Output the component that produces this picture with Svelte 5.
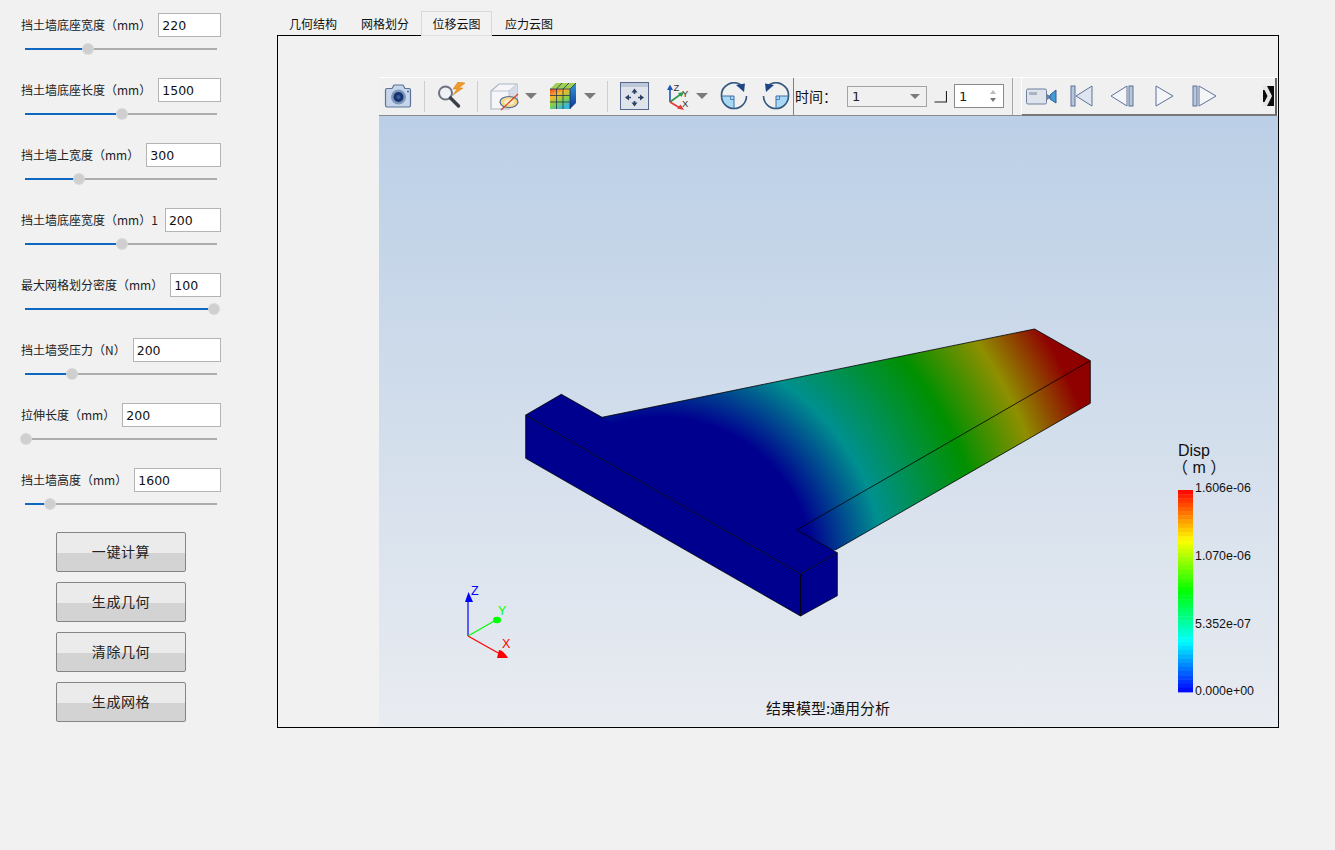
<script>
  const rows = [
    { label: '挡土墙底座宽度（mm）', value: '220', pos: 63 },
    { label: '挡土墙底座长度（mm）', value: '1500', pos: 97 },
    { label: '挡土墙上宽度（mm）', value: '300', pos: 54 },
    { label: '挡土墙底座宽度（mm）1', value: '200', pos: 97 },
    { label: '最大网格划分密度（mm）', value: '100', pos: 189 },
    { label: '挡土墙受压力（N）', value: '200', pos: 47 },
    { label: '拉伸长度（mm）', value: '200', pos: 1 },
    { label: '挡土墙高度（mm）', value: '1600', pos: 25 }
  ];
  const buttons = ['一键计算', '生成几何', '清除几何', '生成网格'];
  const tabs = ['几何结构', '网格划分', '位移云图', '应力云图'];

  function bandColor(t) {
    const seg = t * 4;
    const f = seg - Math.floor(seg);
    const up = Math.round(255 * f);
    const dn = 255 - up;
    if (seg < 1) return `rgb(255,${up},0)`;
    if (seg < 2) return `rgb(${dn},255,0)`;
    if (seg < 3) return `rgb(0,255,${up})`;
    return `rgb(0,${dn},255)`;
  }
  const bandCount = 48;
  const bands = Array.from({ length: bandCount }, (_, i) => ({
    y: 490 + (i * 202) / bandCount,
    color: bandColor((i + 0.5) / bandCount)
  }));
</script>

<div class="page">
  <aside class="panel">
    <div class="rows">
      {#each rows as r}
        <div class="row">
          <div class="head">
            <span class="label">{r.label}</span>
            <input class="field" value={r.value} readonly />
          </div>
          <div class="slider">
            <div class="fill" style="width:{r.pos}px"></div>
            <div class="thumb" style="left:{r.pos - 5}px"></div>
          </div>
        </div>
      {/each}
    </div>
    <div class="buttons">
      {#each buttons as b}
        <button class="btn">{b}</button>
      {/each}
    </div>
  </aside>

  <main class="main">
    <nav class="tabs">
      {#each tabs as t, i}
        <div class="tab" class:active={i === 2}>{t}</div>
      {/each}
    </nav>
    <section class="frame">
      <div class="toolbar">
        <svg class="ic cam" width="28" height="24" viewBox="0 0 28 24">
          <path d="M1.500 6 Q1.500 4.500 3 4.500 H8 L10 1 H19 L21 4.500 H25 Q26.500 4.500 26.500 6 V21 Q26.500 23 25 23 H3 Q1.500 23 1.500 21 Z" fill="#c6d5e9" stroke="#5b7299" stroke-width="1.200"/>
          <circle cx="14.500" cy="13" r="7.500" fill="#7e97bd"/>
          <circle cx="14.500" cy="13" r="5" fill="#17346e"/>
          <circle cx="14.500" cy="13" r="2" fill="#3b5b98"/>
          <circle cx="24" cy="7.500" r="0.900" fill="#41597f"/>
        </svg>
        <i class="sep s1"></i>
        <svg class="ic srch" width="30" height="28" viewBox="0 0 30 28">
          <path d="M21 0 L16 7 H20 L16 13 L26 6 H22 L28 1 Z" fill="#ee9a2a" stroke="#d17c12" stroke-width=".5"/>
          <circle cx="8.500" cy="11" r="6.500" fill="#eef2f6" stroke="#6d7480" stroke-width="2"/>
          <path d="M13.500 16 L21.500 24" stroke="#39404a" stroke-width="3.400" stroke-linecap="round"/>
        </svg>
        <i class="sep s2"></i>
        <svg class="ic cube" width="29" height="30" viewBox="0 0 29 30">
          <path d="M1 10 L9 3 H27 V21 L19 28 H1 Z" fill="#f6f6f8" stroke="#a9b4c6" stroke-width="1.200"/>
          <path d="M19 10 L27 3 V21 L19 28 Z" fill="#d7dde6"/>
          <path d="M1 10 H19 L27 3 M19 10 V28" fill="none" stroke="#b9c3d2" stroke-width="1"/>
          <ellipse cx="19" cy="21" rx="9" ry="5.500" fill="#f3d98c" stroke="#4f6a97" stroke-width="1.200"/>
          <ellipse cx="19" cy="21" rx="5" ry="2.800" fill="#f8eccb"/>
          <path d="M11 29 L28 13" stroke="#d6451f" stroke-width="1.200"/>
        </svg>
        <i class="arrow a1"></i>
        <svg class="ic grid" width="28" height="28" viewBox="0 0 28 28">
          <defs>
            <linearGradient id="rb" x1="0" y1="0" x2="0.500" y2="1">
              <stop offset="0" stop-color="#e8442c"/><stop offset=".35" stop-color="#f7b52c"/>
              <stop offset=".7" stop-color="#7ed14a"/><stop offset="1" stop-color="#3bb6d8"/>
            </linearGradient>
            <linearGradient id="rs" x1="0" y1="0" x2="0" y2="1">
              <stop offset="0" stop-color="#2f9ad6"/><stop offset="1" stop-color="#12349a"/>
            </linearGradient>
          </defs>
          <path d="M1 7 L7 1 H27 L21 7 Z" fill="#9fcf56"/>
          <path d="M21 7 L27 1 V21 L21 27 Z" fill="url(#rs)"/>
          <rect x="1" y="7" width="20" height="20" fill="url(#rb)"/>
          <path d="M1 13.500 H21 M1 20 H21 M7.500 7 V27 M14 7 V27 M21 7 V27 M1 7 H21 M7.500 7 L13 1 M14 7 L20 1 M21 7 L27 1" stroke="#27324a" stroke-width=".8" fill="none"/>
        </svg>
        <i class="arrow a2"></i>
        <i class="sep s3"></i>
        <svg class="ic fit" width="29" height="28" viewBox="0 0 29 28">
          <rect x=".500" y=".500" width="28" height="27" fill="#dfe3ea" stroke="#56698c"/>
          <rect x="1" y="1" width="27" height="4" fill="#bcc8da"/>
          <path d="M14.500 9 V12 M14.500 19 V22 M8 15.500 H11 M18 15.500 H21" stroke="#2d4266" stroke-width="1.600"/>
          <path d="M14.500 6.500 L11.500 10.500 H17.500 Z M14.500 24.500 L11.500 20.500 H17.500 Z M5 15.500 L9 12.500 V18.500 Z M24 15.500 L20 12.500 V18.500 Z" fill="#2d4266"/>
        </svg>
        <svg class="ic axes" width="26" height="28" viewBox="0 0 26 28">
          <path d="M6 20 V6" stroke="#1d55b5" stroke-width="1.600"/>
          <path d="M6 2.500 L3 8 H9 Z" fill="#1d55b5"/>
          <path d="M6 20 L17 12" stroke="#2b9a4a" stroke-width="1.600"/>
          <path d="M20 10 L14 11 L17.500 15 Z" fill="#2b9a4a"/>
          <path d="M6 20 L16 26" stroke="#e23a3a" stroke-width="1.600"/>
          <path d="M20 28 L13 26.500 L16.500 22.500 Z" fill="#e23a3a"/>
          <text x="9.500" y="9" class="axt">Z</text>
          <text x="18" y="15" class="axt">Y</text>
          <text x="18" y="25" class="axt">X</text>
        </svg>
        <i class="arrow a3"></i>
        <svg class="ic rot1" width="28" height="28" viewBox="0 0 28 28">
          <path d="M14 14 H1.500 A12.500 12.500 0 0 0 14 26.500 Z" fill="#a9d8f4"/>
          <path d="M10.500 14 V17.500 H14" fill="none" stroke="#3d6ea6" stroke-width=".8"/>
          <path d="M1.500 14 H14 V26.500" fill="none" stroke="#3d6ea6" stroke-width="1"/>
          <path d="M21 3 A12.500 12.500 0 0 0 1.500 14 A12.500 12.500 0 0 0 14 26.500 A12.500 12.500 0 0 0 26.500 14" fill="none" stroke="#35597f" stroke-width="1.600"/>
          <path d="M25 1.500 L16 3 L24 10 Z" fill="#1f4684"/>
        </svg>
        <svg class="ic rot2" width="28" height="28" viewBox="0 0 28 28">
          <path d="M14 14 H26.500 A12.500 12.500 0 0 1 14 26.500 Z" fill="#a9d8f4"/>
          <path d="M17.500 14 V17.500 H14" fill="none" stroke="#3d6ea6" stroke-width=".8"/>
          <path d="M26.500 14 H14 V26.500" fill="none" stroke="#3d6ea6" stroke-width="1"/>
          <path d="M7 3 A12.500 12.500 0 0 1 26.500 14 A12.500 12.500 0 0 1 14 26.500 A12.500 12.500 0 0 1 1.500 14" fill="none" stroke="#35597f" stroke-width="1.600"/>
          <path d="M3 1.500 L12 3 L4 10 Z" fill="#1f4684"/>
        </svg>
        <i class="sep dark"></i>
        <span class="time">时间：</span>
        <div class="combo"><span>1</span><i class="arrow small"></i></div>
        <svg class="ic corner" width="13" height="12" viewBox="0 0 13 12">
          <path d="M.500 11 H12.500 V0" fill="none" stroke="#222" stroke-width="1.200"/>
        </svg>
        <div class="spin">
          <span>1</span>
          <svg width="8" height="14" viewBox="0 0 8 14"><path d="M4 1 L7 5 H1 Z" fill="#bbb"/><path d="M4 13 L7 9 H1 Z" fill="#777"/></svg>
        </div>
        <i class="sep gray"></i>
        <div class="sub">
          <svg class="ic vcam" width="31" height="17" viewBox="0 0 31 17">
            <rect x=".500" y="1" width="20" height="15" rx="1.500" fill="#dfe4ec" stroke="#6d80a0"/>
            <rect x="3" y="4" width="8" height="3" fill="#aab3c0"/>
            <path d="M21 6 L24 8 V10 L21 12 Z" fill="#6d80a0"/>
            <path d="M24 7 L30 2 V15 L24 11 Z" fill="#3f9bd8" stroke="#345b8c"/>
          </svg>
          <svg class="ic tf" width="23" height="22" viewBox="0 0 23 22">
            <rect x="1" y="1" width="4" height="20" fill="#b8c6da" stroke="#5c7399"/>
            <path d="M22 1 V21 L6 11 Z" fill="#dfe5ee" stroke="#5c7399"/>
          </svg>
          <svg class="ic tp" width="25" height="22" viewBox="0 0 25 22">
            <path d="M17 1 V21 L1 11 Z" fill="#f3f5f8" stroke="#5c7399"/>
            <rect x="19" y="1" width="4" height="20" fill="#b8c6da" stroke="#5c7399"/>
          </svg>
          <svg class="ic tn" width="19" height="22" viewBox="0 0 19 22">
            <path d="M1 1 V21 L18 11 Z" fill="#f3f5f8" stroke="#5c7399"/>
          </svg>
          <svg class="ic tl" width="25" height="22" viewBox="0 0 25 22">
            <rect x="1" y="1" width="4" height="20" fill="#b8c6da" stroke="#5c7399"/>
            <path d="M7 1 V21 L24 11 Z" fill="#f3f5f8" stroke="#5c7399"/>
          </svg>
          <svg class="ic more" width="11" height="20" viewBox="0 0 11 20">
            <rect width="11" height="20" fill="#0c0c0c"/>
            <path d="M0 0 H4 L9 10 L4 20 H0 V16 H1.500 L4.500 10 L1.500 4 H0 Z" fill="#e6e6e6"/>
          </svg>
        </div>
      </div>
      <div class="view">
        <svg class="scene" viewBox="379 116 899 611" width="899" height="611">
          <defs>
            <radialGradient id="disp" gradientUnits="userSpaceOnUse" cx="660" cy="570" r="470">
              <stop offset="0.325" stop-color="#00008f"/>
              <stop offset="0.475" stop-color="#00908f"/>
              <stop offset="0.685" stop-color="#009000"/>
              <stop offset="0.83" stop-color="#8f8f00"/>
              <stop offset="0.96" stop-color="#8f0000"/>
            </radialGradient>
          </defs>
          <polygon points="602,417.300 1034.600,329 1090.300,360.700 1090.300,403.300 835.300,550 820,556 600,440" fill="url(#disp)"/>
          <polygon points="525.700,415 561.300,394.300 602,417.300 796.600,530 837.300,552.700 800.500,574" fill="#00008f"/>
          <polygon points="525.700,415 800.500,574 800.500,616 525.700,458.300" fill="#00008f" stroke="#000" stroke-width="0.800"/>
          <polygon points="800.500,574 837.300,552.700 837.300,595.700 800.500,616" fill="#00008f" stroke="#000" stroke-width="0.800"/>
          <path d="M525.700 415 L561.300 394.300 L602 417.300 L1034.600 329 L1090.300 360.700 V403.300 L835.300 550 M796.600 530 L837.300 552.700 M796.600 530 L1090.300 360.700" fill="none" stroke="#000" stroke-width="0.800"/>

          <path d="M468 636 V600" stroke="#0000ff" stroke-width="1.200"/>
          <path d="M468.500 592 L465 602 H473 Z" fill="#0000ff"/>
          <path d="M468 636 L496 620" stroke="#00ff00" stroke-width="1.200"/>
          <ellipse cx="497" cy="620" rx="4" ry="3.200" fill="#00ff00"/>
          <path d="M468 636 L500 654" stroke="#ff0000" stroke-width="1.200"/>
          <path d="M508 658 L497 658 L499 650 Q503 650 508 658 Z" fill="#ff0000"/>
          <text x="471" y="595" class="tri z">Z</text>
          <text x="498" y="614.500" class="tri y">Y</text>
          <text x="502" y="648" class="tri x">X</text>

          <text x="1178" y="456" class="disp">Disp</text>
          <text x="1172" y="473" class="disp">（ m ）</text>
          {#each bands as b}
            <rect x="1178" y={b.y} width="15" height="4.600" fill={b.color}/>
          {/each}
          <text x="1195" y="492" class="lg">1.606e-06</text>
          <text x="1195" y="560" class="lg">1.070e-06</text>
          <text x="1195" y="628" class="lg">5.352e-07</text>
          <text x="1195" y="695" class="lg">0.000e+00</text>
          <text x="828" y="714" class="cap">结果模型:通用分析</text>
        </svg>
      </div>
    </section>
  </main>
</div>

<style>
  :global(body) {
    margin: 0;
    background: #f1f1f1;
  }
  .page {
    display: flex;
    width: 1335px;
    height: 850px;
    overflow: hidden;
    font-family: "Noto Sans CJK SC", "Liberation Sans", sans-serif;
    color: #222;
  }
  .panel {
    width: 277px;
    flex: none;
    box-sizing: border-box;
    padding: 13px 0 0 21px;
  }
  .rows {
    display: flex;
    flex-direction: column;
    gap: 28px;
    width: 200px;
  }
  .row {
    height: 37px;
  }
  .head {
    display: flex;
    align-items: center;
    gap: 7px;
    height: 24px;
  }
  .label {
    font-size: 12px;
    white-space: nowrap;
    line-height: 24px;
    flex: none;
  }
  .field {
    flex: 1;
    min-width: 0;
    box-sizing: border-box;
    height: 24px;
    border: 1px solid #b4b4b4;
    background: #fff;
    padding: 0 3px;
    font: 12.500px "DejaVu Sans", sans-serif;
    color: #111;
    outline: none;
  }
  .slider {
    position: relative;
    margin: 11px 0 0 4px;
    width: 192px;
    height: 2px;
    background: #adadad;
  }
  .fill {
    height: 2px;
    background: #0f68bd;
  }
  .thumb {
    position: absolute;
    top: -4px;
    width: 10px;
    height: 10px;
    border-radius: 50%;
    background: #cfcfcf;
    box-shadow: 0 0 0 1px #d8d8d8;
  }
  .buttons {
    display: flex;
    flex-direction: column;
    gap: 10px;
    margin: 27px 0 0 35px;
  }
  .btn {
    width: 130px;
    height: 40px;
    box-sizing: border-box;
    border: 1px solid #858585;
    border-radius: 2px;
    background: linear-gradient(#ebebeb 0 52%, #d3d3d3 52% 100%);
    font: 14px "Noto Sans CJK SC", sans-serif;
    letter-spacing: 0.6px;
    color: #222;
    padding: 0 0 2px;
  }
  .main {
    width: 1002px;
    flex: none;
    padding-top: 11px;
  }
  .tabs {
    display: flex;
    height: 24px;
  }
  .tab {
    width: 72px;
    box-sizing: border-box;
    padding-top: 4px;
    font-size: 12px;
    line-height: 18px;
    text-align: center;
    color: #111;
  }
  .tab.active {
    position: relative;
    z-index: 1;
    border: 1px solid #d9d9d9;
    border-bottom-color: #e0e0e0;
    background: #f2f2f2;
    padding-top: 3px;
    width: 71px;
    height: 25px;
    margin-right: 1px;
  }
  .frame {
    box-sizing: border-box;
    width: 1002px;
    height: 693px;
    border: 1px solid #000;
    padding: 41px 0 0 101px;
    display: flex;
    flex-direction: column;
    background: #f1f1f1;
  }
  .toolbar {
    display: flex;
    align-items: center;
    height: 39px;
    width: 898px;
    box-sizing: border-box;
    border-top: 1px solid #fff;
    border-bottom: 1px solid #8a8a8a;
    padding-bottom: 1px;
    background: #f0f0f0;
    flex: none;
  }
  .ic {
    display: block;
    flex: none;
  }
  .sep {
    display: block;
    width: 1px;
    height: 31px;
    background: #cfcfcf;
    flex: none;
  }
  .cam { margin-left: 5px; }
  .s1 { margin-left: 12px; }
  .srch { margin-left: 12px; }
  .s2 { margin-left: 10px; }
  .cube { margin-left: 12px; }
  .arrow {
    display: block;
    flex: none;
    width: 0;
    height: 0;
    border-left: 6px solid transparent;
    border-right: 6px solid transparent;
    border-top: 6px solid #7b7b7b;
  }
  .a1 { margin-left: 6px; }
  .grid { margin-left: 12px; }
  .a2 { margin-left: 7px; }
  .s3 { margin-left: 11px; }
  .fit { margin-left: 12px; }
  .axes { margin-left: 15px; }
  .a3 { margin-left: 6px; }
  .rot1 { margin-left: 12px; }
  .rot2 { margin-left: 14px; }
  .axt {
    font: 9.500px "Liberation Sans", sans-serif;
    fill: #333;
  }
  .sep.dark {
    margin-left: 3px;
    height: 37px;
    background: #808080;
  }
  .time {
    margin-left: 1px;
    width: 42px;
    font-size: 14px;
    white-space: nowrap;
    color: #111;
    flex: none;
  }
  .combo {
    margin-left: 10px;
    width: 80px;
    height: 21px;
    box-sizing: border-box;
    border: 1px solid #a3a3a3;
    display: flex;
    align-items: center;
    justify-content: space-between;
    padding: 0 6px 0 4px;
    font: 13px "DejaVu Sans", sans-serif;
    flex: none;
  }
  .arrow.small {
    border-left-width: 5px;
    border-right-width: 5px;
    border-top-width: 5px;
  }
  .corner { margin-left: 7px; margin-top: 1px; }
  .spin {
    margin-left: 7px;
    width: 50px;
    height: 24px;
    box-sizing: border-box;
    border: 1px solid #8a8a8a;
    background: #fff;
    display: flex;
    align-items: center;
    justify-content: space-between;
    padding: 0 6px 0 4px;
    font: 13px "DejaVu Sans", sans-serif;
    flex: none;
  }
  .sep.gray {
    margin-left: 8px;
    height: 37px;
    background: #a8a8a8;
  }
  .sub {
    margin: 0 0 -2px 8px;
    flex: 1;
    align-self: stretch;
    display: flex;
    align-items: center;
    box-sizing: border-box;
    border-left: 1px solid #fff;
    border-right: 2px solid #666;
    border-bottom: 2px solid #777;
  }
  .vcam { margin-left: 4px; }
  .tf { margin-left: 13px; }
  .tp { margin-left: 17px; }
  .tn { margin-left: 20px; }
  .tl { margin-left: 18px; }
  .more { margin-left: 46px; }
  .view {
    flex: 1;
    width: 899px;
    background: linear-gradient(#bbcfe6, #e9ecf1);
    min-height: 0;
  }
  .scene {
    display: block;
  }
  .tri {
    font: 12.500px "Liberation Sans", sans-serif;
  }
  .tri.z { fill: #0000ff; }
  .tri.y { fill: #00ff00; }
  .tri.x { fill: #ff0000; }
  .disp {
    font: 16px "Liberation Sans", "Noto Sans CJK SC", sans-serif;
    fill: #111;
  }
  .lg {
    font: 12.400px "Liberation Sans", sans-serif;
    fill: #111;
  }
  .cap {
    font: 15px "Noto Sans CJK SC", sans-serif;
    fill: #111;
    text-anchor: middle;
  }
</style>
